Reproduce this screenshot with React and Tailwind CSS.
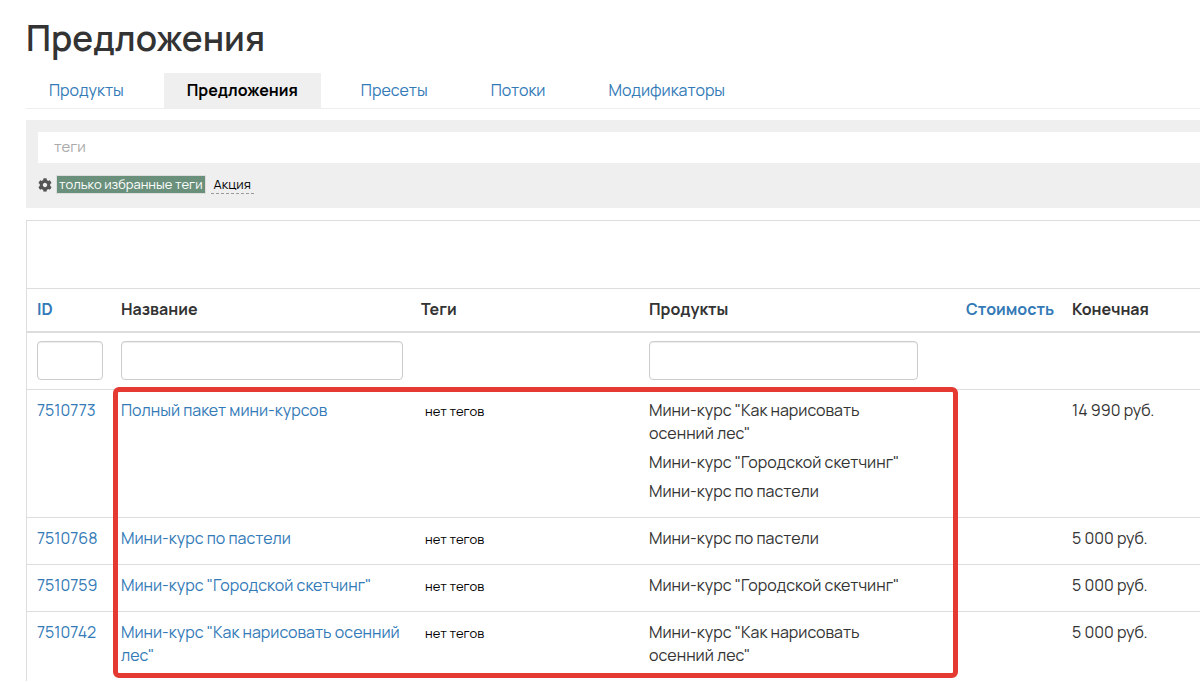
import React, { useState } from "react";
import { FaCog } from "react-icons/fa";

const tabs = ["Продукты", "Предложения", "Пресеты", "Потоки", "Модификаторы"];

const offers = [
  {
    id: 7510773,
    name: "Полный пакет мини-курсов",
    products: [
      'Мини-курс "Как нарисовать осенний лес"',
      'Мини-курс "Городской скетчинг"',
      "Мини-курс по пастели",
    ],
    price: "14 990 руб.",
  },
  {
    id: 7510768,
    name: "Мини-курс по пастели",
    products: ["Мини-курс по пастели"],
    price: "5 000 руб.",
  },
  {
    id: 7510759,
    name: 'Мини-курс "Городской скетчинг"',
    products: ['Мини-курс "Городской скетчинг"'],
    price: "5 000 руб.",
  },
  {
    id: 7510742,
    name: 'Мини-курс "Как нарисовать осенний лес"',
    products: ['Мини-курс "Как нарисовать осенний лес"'],
    price: "5 000 руб.",
  },
];

const FilterInput = ({ label, value, onChange }) => (
  <input
    type="text"
    aria-label={label}
    value={value}
    onChange={(e) => onChange(e.target.value)}
    className="block h-[39px] w-full rounded border border-[#ccc] bg-white px-3 shadow-[inset_0_1px_1px_rgba(0,0,0,0.075)] outline-none"
  />
);

const OffersTable = () => {
  const [filters, setFilters] = useState({ id: "", name: "", product: "" });

  const setFilter = (key) => (value) =>
    setFilters((prev) => ({ ...prev, [key]: value }));

  // Фильтрация по строке под заголовком таблицы
  const rows = offers.filter(
    (offer) =>
      String(offer.id).includes(filters.id) &&
      offer.name.toLowerCase().includes(filters.name.toLowerCase()) &&
      offer.products.some((p) =>
        p.toLowerCase().includes(filters.product.toLowerCase())
      )
  );

  return (
    <div className="relative border-t border-l border-[#ddd] pt-[67px]">
      <table className="w-full table-fixed border-collapse text-left">
        <colgroup>
          <col className="w-[84px]" />
          <col className="w-[300px]" />
          <col className="w-[228px]" />
          <col className="w-[287px]" />
          <col className="w-[136px]" />
          <col />
        </colgroup>
        <thead>
          <tr className="h-[43px] border-t border-b-2 border-[#ddd] [&>th]:pr-2 [&>th]:pl-[10px] [&>th]:font-bold">
            <th>
              <a href="#id" className="text-[#337ab7]">ID</a>
            </th>
            <th>Название</th>
            <th>Теги</th>
            <th>Продукты</th>
            <th className="text-right">
              <a href="#price" className="text-[#337ab7]">Стоимость</a>
            </th>
            <th>Конечная</th>
          </tr>
          <tr className="h-[58px] [&>td]:pr-2 [&>td]:pl-[10px]">
            <td>
              <FilterInput label="ID" value={filters.id} onChange={setFilter("id")} />
            </td>
            <td>
              <FilterInput label="Название" value={filters.name} onChange={setFilter("name")} />
            </td>
            <td></td>
            <td>
              <FilterInput label="Продукты" value={filters.product} onChange={setFilter("product")} />
            </td>
            <td></td>
            <td></td>
          </tr>
        </thead>
        <tbody>
          {rows.map((offer) => (
            <tr
              key={offer.id}
              className="border-t border-[#ddd] align-top [&>td]:pt-[9px] [&>td]:pr-2 [&>td]:pb-2 [&>td]:pl-[10px]"
            >
              <td>
                <a href={`#${offer.id}`} className="text-[#337ab7]">{offer.id}</a>
              </td>
              <td>
                <a href={`#${offer.id}`} className="text-[#337ab7]">{offer.name}</a>
              </td>
              <td>
                <span className="px-1 text-[13px] text-black">нет тегов</span>
              </td>
              <td>
                {offer.products.map((product) => (
                  <div key={product} className="mb-[6px]">{product}</div>
                ))}
              </td>
              <td></td>
              <td>{offer.price}</td>
            </tr>
          ))}
        </tbody>
      </table>

      {/* Рамка вокруг списка предложений */}
      <div className="pointer-events-none absolute top-[166px] left-[86px] h-[291px] w-[845px] rounded-md border-[5px] border-[#e53a32]"></div>
    </div>
  );
};

const App = () => {
  const [activeTab, setActiveTab] = useState("Предложения");
  const [onlyFavorite, setOnlyFavorite] = useState(true);

  return (
    <div className="overflow-hidden bg-white pt-4 pl-[26px] font-['Manrope','Inter',sans-serif] text-[16px] leading-[23px] text-[#333]">
      <h1 className="text-[35px] leading-[45px] font-semibold">Предложения</h1>

      <nav className="mt-3 flex gap-[17px] border-b border-[#eee]">
        {tabs.map((tab) => (
          <a
            key={tab}
            href="#tab"
            onClick={() => setActiveTab(tab)}
            className={`px-[23px] py-[6px] ${
              tab === activeTab
                ? "bg-[#efefef] font-bold text-black"
                : "text-[#337ab7]"
            }`}
          >
            {tab}
          </a>
        ))}
      </nav>

      <div className="mt-[11px] mb-3 bg-[#efefef] py-3 pl-3">
        <input
          type="text"
          aria-label="теги"
          placeholder="теги"
          className="block h-[31px] w-full bg-white px-4 pb-[2px] text-[15px] outline-none placeholder:text-[#aaa]"
        />
        <div className="mt-[10px] flex h-[23px] items-center text-[13px] leading-[17px]">
          <button type="button" aria-label="Настройки" className="mr-1 text-[#555]">
            <FaCog size={14} />
          </button>
          <button
            type="button"
            onClick={() => setOnlyFavorite(!onlyFavorite)}
            className={`mr-[5px] border border-[#ddd] px-[2px] ${
              onlyFavorite ? "bg-[#6a907c] text-white" : "text-black"
            }`}
          >
            только избранные теги
          </button>
          <button type="button" className="border-b border-dashed border-[#999] px-[3px] text-black">
            Акция
          </button>
        </div>
      </div>

      <OffersTable />
    </div>
  );
};

export default App;
